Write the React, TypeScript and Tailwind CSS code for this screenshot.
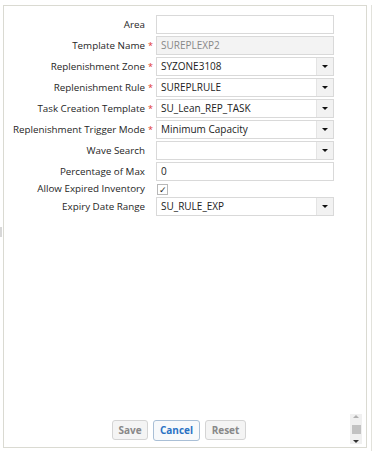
const fields = [
  { label: 'Area', req: false, kind: 'text', value: '' },
  { label: 'Template Name', req: true, kind: 'readonly', value: 'SUREPLEXP2' },
  { label: 'Replenishment Zone', req: true, kind: 'select', value: 'SYZONE3108' },
  { label: 'Replenishment Rule', req: true, kind: 'select', value: 'SUREPLRULE' },
  { label: 'Task Creation Template', req: true, kind: 'select', value: 'SU_Lean_REP_TASK' },
  { label: 'Replenishment Trigger Mode', req: true, kind: 'select', value: 'Minimum Capacity' },
  { label: 'Wave Search', req: false, kind: 'select', value: '' },
  { label: 'Percentage of Max', req: false, kind: 'text', value: '0' },
  { label: 'Allow Expired Inventory', req: false, kind: 'check', value: '' },
  { label: 'Expiry Date Range', req: false, kind: 'select', value: 'SU_RULE_EXP' },
]

const Field = ({ kind, value }: { kind: string; value: string }) => {
  if (kind === 'check') {
    return (
      <div className="flex h-[12px] items-center pl-[1px]">
        <div className="flex h-[11px] w-[11px] items-center justify-center border border-[#b8b8b8] bg-white text-[9px] leading-none text-[#222]">
          ✓
        </div>
      </div>
    )
  }
  if (kind === 'select') {
    return (
      <div className="flex h-[19px] w-[178px] border border-[#d9d9d9] bg-white">
        <div className="flex flex-1 items-center pl-[4px] text-[10px] text-[#222]">{value}</div>
        <div className="flex w-[17px] items-center justify-center border-l border-[#e4e4e4] bg-[#f2f2f2]">
          <div className="h-0 w-0 border-x-[3px] border-t-[3px] border-x-transparent border-t-[#111]" />
        </div>
      </div>
    )
  }
  return (
    <div
      className={`flex h-[19px] w-[178px] items-center border border-[#d9d9d9] pl-[4px] text-[10px] ${
        kind === 'readonly' ? 'bg-[#f3f3f3] text-[#888]' : 'bg-white text-[#222]'
      }`}
    >
      {value}
    </div>
  )
}

export default function App() {
  return (
    <div className="relative h-[451px] w-[374px] bg-white font-['Open_Sans',sans-serif]">
      <div className="absolute left-0 top-[222px] h-[10px] w-[2px] bg-[#d8d8d8]" />
      <div className="absolute right-[2px] top-0 h-full w-px bg-[#e2e2dc]" />
      <div className="ml-[3px] mt-[5px] flex h-[443px] w-[364px] flex-col border border-[#dadad2] bg-white">
        <div className="flex flex-col gap-[2px] pt-[9px]">
          {fields.map((f) => (
            <div key={f.label} className="flex items-center">
              <div className="w-[141px] text-right text-[9.8px] leading-none text-[#262626]">{f.label}</div>
              <div className="w-[11px] pl-[3px] text-[9px] leading-none text-[#e0342a]">{f.req ? '*' : ''}</div>
              <Field kind={f.kind} value={f.value} />
            </div>
          ))}
        </div>
        <div className="mt-auto flex items-end pb-[3px]">
          <div className="flex flex-1 justify-center gap-[5px] pb-[3px] pl-[4px]">
            <button className="h-[20px] w-[36px] rounded-[3px] border border-[#d4d4d4] bg-[#f4f4f4] text-[10px] font-bold text-[#888]">
              Save
            </button>
            <button className="h-[21px] w-[47px] rounded-[3px] border border-[#a9bfd6] bg-[#f7f9fb] text-[10px] font-bold text-[#2a72c4]">
              Cancel
            </button>
            <button className="h-[20px] w-[41px] rounded-[3px] border border-[#d4d4d4] bg-[#f4f4f4] text-[10px] font-bold text-[#888]">
              Reset
            </button>
          </div>
          <div className="mr-[4px] flex h-[30px] w-[12px] flex-col items-center justify-between bg-[#f0f0f0] py-[1px]">
            <div className="h-0 w-0 border-x-[3px] border-b-[3px] border-x-transparent border-b-[#b0b0b0]" />
            <div className="h-[9px] w-[9px] bg-[#c2c2c2]" />
            <div className="h-0 w-0 border-x-[3px] border-t-[3px] border-x-transparent border-t-[#333]" />
          </div>
        </div>
      </div>
    </div>
  )
}
